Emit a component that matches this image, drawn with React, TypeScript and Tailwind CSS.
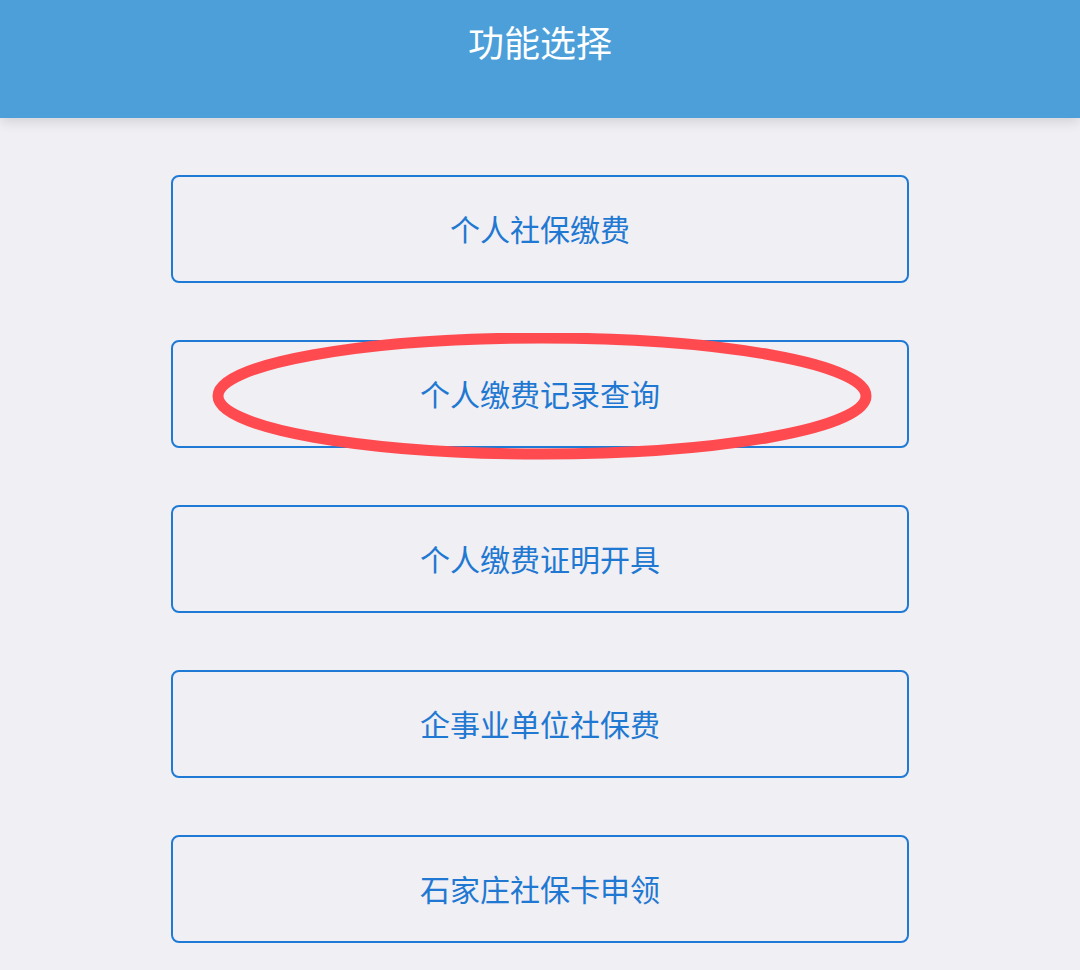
import React from "react";

const items = [
  "个人社保缴费",
  "个人缴费记录查询",
  "个人缴费证明开具",
  "企事业单位社保费",
  "石家庄社保卡申领",
];

export default function App() {
  return (
    <div
      className="min-h-[970px] w-full bg-[#efeff4]"
      style={{ fontFamily: '"Noto Sans CJK SC", "Noto Sans", sans-serif' }}
    >
      {/* Header */}
      <header className="relative z-10 h-[118px] bg-[#4d9fd9] shadow-[0_4px_12px_rgba(0,0,0,0.12)]">
        <h1 className="pt-[18px] text-center text-[36px] leading-[46px] font-normal text-white">
          功能选择
        </h1>
      </header>

      {/* Menu */}
      <main className="flex flex-col items-center gap-[57px] pt-[57px]">
        {items.map((label, i) => (
          <div key={label} className="relative">
            <button className="flex h-[108px] w-[738px] items-center justify-center rounded-[8px] border-[2.5px] border-[#1f7ad6] bg-transparent pb-[3px] text-[30px] leading-none text-[#1f78d1]">
              {label}
            </button>
            {i === 1 && (
              <svg
                className="pointer-events-none absolute left-[-171px] top-[-7px]"
                width="1080"
                height="130"
                viewBox="0 0 1080 130"
              >
                <ellipse
                  cx="542"
                  cy="63"
                  rx="324"
                  ry="58"
                  fill="none"
                  stroke="#ff4b50"
                  strokeWidth="11"
                />
              </svg>
            )}
          </div>
        ))}
      </main>
    </div>
  );
}
